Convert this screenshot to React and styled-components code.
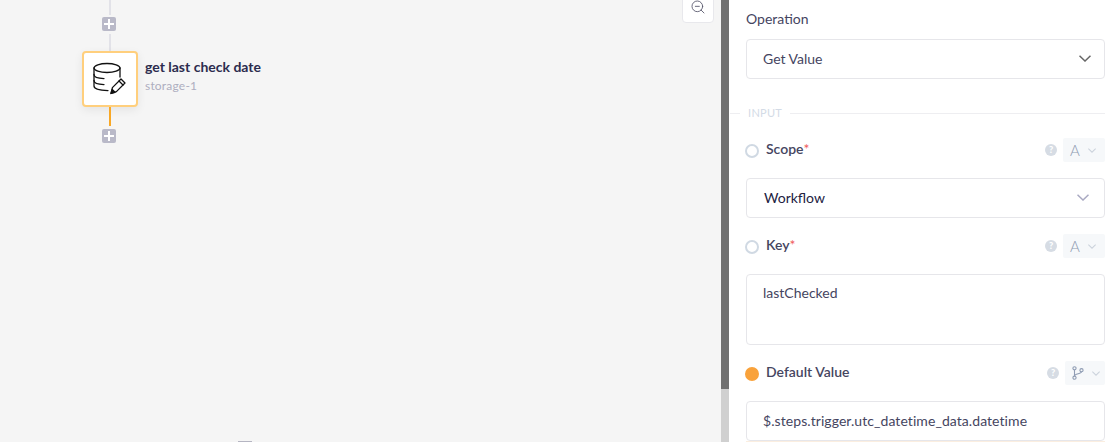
import React from "react";
import styled, { createGlobalStyle } from "styled-components";
import { ZoomOut } from "lucide-react";

const Global = createGlobalStyle`
  html, body { margin: 0; padding: 0; height: 100%; overflow: hidden; background: #fff; }
  body { font-family: "Lato", "Noto Sans", sans-serif; color: #3d3d5c; }
`;

const Page = styled.div`
  display: flex;
  width: 1116px;
  height: 442px;
  overflow: hidden;
`;

/* left canvas */
const Canvas = styled.div`
  position: relative;
  width: 721px;
  flex: none;
  background: #f5f5f5;
  padding-left: 82px;
  box-sizing: border-box;
`;

const Flow = styled.div`
  display: flex;
  flex-direction: column;
  align-items: flex-start;
`;

const Line = styled.div`
  width: 2px;
  margin-left: 27px;
  height: ${p => p.$h}px;
  background: ${p => p.$active ? "#f9a826" : "#e2e2e8"};
`;

const PlusBox = styled.div`
  width: 14px;
  height: 14px;
  margin-left: 20px;
  margin-top: ${p => p.$mt || 0}px;
  margin-bottom: ${p => p.$mb || 0}px;
  background: #b9b9c8;
  border-radius: 2px;
  display: flex;
  align-items: center;
  justify-content: center;
`;

const NodeRow = styled.div`
  display: flex;
  align-items: flex-start;
  gap: 7px;
`;

const NodeBox = styled.div`
  width: 56px;
  height: 56px;
  box-sizing: border-box;
  background: #fff;
  border: 2px solid #ffcf7d;
  border-radius: 4px;
  box-shadow: 0 3px 10px rgba(0, 0, 0, 0.07);
  display: flex;
  align-items: center;
  justify-content: center;
`;

const NodeText = styled.div`
  padding-top: 7px;
`;

const NodeTitle = styled.div`
  font-size: 14px;
  line-height: 18px;
  font-weight: 700;
  color: #2c2c4e;
`;

const NodeSub = styled.div`
  font-size: 12px;
  line-height: 16px;
  letter-spacing: 0.2px;
  margin-top: 2px;
  color: #aeaebf;
`;

const ZoomButton = styled.button`
  position: absolute;
  left: 682px;
  top: -10px;
  width: 32px;
  height: 33px;
  padding: 0 0 7px;
  background: #fff;
  border: 1px solid #e8e8ec;
  border-radius: 4px;
  display: flex;
  align-items: flex-end;
  justify-content: center;
  box-sizing: border-box;
  color: #55556a;
`;

const BottomStub = styled.div`
  position: absolute;
  left: 238px;
  bottom: 0;
  width: 14px;
  height: 1px;
  background: #b5b5c2;
`;

/* scrollbar */
const Scrollbar = styled.div`
  width: 8px;
  flex: none;
  display: flex;
  flex-direction: column;
  background: #d0d0d0;
`;

const Thumb = styled.div`
  height: 389px;
  background: #717171;
`;

/* right panel */
const Panel = styled.div`
  flex: 1;
  background: #fff;
  padding: 9px 11px 0 17px;
  min-width: 0;
`;

const PlainLabel = styled.div`
  font-size: 14px;
  line-height: 19px;
  color: #45455f;
  margin-bottom: 11px;
`;

const Field = styled.div`
  height: ${p => p.$h || 40}px;
  box-sizing: border-box;
  border: 1px solid #e6e6ea;
  border-radius: 4px;
  display: flex;
  align-items: ${p => p.$top ? "flex-start" : "center"};
  justify-content: space-between;
  padding: ${p => p.$top ? "8px 13px 0" : "0 13px 1px"};
  padding-left: ${p => p.$dark ? 17 : 16}px;
  padding-right: ${p => p.$dark ? 15 : 13}px;
  font-size: 14px;
  line-height: 19px;
  letter-spacing: ${p => p.$wide ? "0.07px" : "0"};
  color: ${p => p.$dark ? "#22223f" : "#45455f"};
`;

const FieldEdge = styled.div`
  height: 1px;
  background: #fbeee0;
`;

const Divider = styled.div`
  display: flex;
  align-items: center;
  gap: 8px;
  margin: 26px 0 17px -16px;
  font-size: 11px;
  line-height: 16px;
  letter-spacing: 0.3px;
  color: #d3dbe6;
  &::before {
    content: "";
    width: 10px;
    height: 1px;
    background: #eeeef1;
  }
  &::after {
    content: "";
    flex: 1;
    height: 1px;
    background: #eeeef1;
  }
`;

const ParamRow = styled.div`
  display: flex;
  align-items: center;
  height: 24px;
  margin: ${p => p.$mt || 0}px 0 16px;
`;

const Radio = styled.span`
  width: 14px;
  height: 14px;
  box-sizing: border-box;
  border-radius: 50%;
  margin: 2px 7px 0 -1px;
  flex: none;
  border: 2px solid ${p => p.$on ? "#f9a23b" : "#d0d9e3"};
  background: ${p => p.$on ? "#f9a23b" : "#fff"};
`;

const ParamName = styled.span`
  font-size: 14px;
  font-weight: 600;
  color: #46465f;
  flex: 1;
  padding-bottom: 4px;
`;

const Required = styled.span`
  color: #ef5b5b;
  font-weight: 400;
`;

const Help = styled.span`
  width: 12px;
  height: 12px;
  border-radius: 50%;
  background: #d6dce4;
  color: #fff;
  font-size: 9px;
  font-weight: 900;
  line-height: 12px;
  text-align: center;
  margin-right: 6px;
`;

const TypeBadge = styled.div`
  height: 24px;
  width: ${p => p.$w}px;
  box-sizing: border-box;
  background: #f6f8fa;
  border-radius: 2px;
  display: flex;
  align-items: center;
  padding-left: 7px;
  gap: 8px;
  font-size: 15px;
  font-weight: 300;
  color: #8f9cb3;
`;

const Chevron = ({ size = 12, color = "#666", width = 1.5 }) => (
  <svg width={size} height={size / 2 + 1} viewBox="0 0 12 7" fill="none" stroke={color} strokeWidth={width}>
    <path d="M0.5 0.7 L6 6 L11.5 0.7" />
  </svg>
);

const PlusIcon = () => (
  <svg width="10" height="10" viewBox="0 0 10 10" fill="#fff">
    <path d="M4 0h2v4h4v2H6v4H4V6H0V4h4z" />
  </svg>
);

const StorageIcon = () => (
  <svg width="34" height="34" viewBox="0 0 34 34" fill="none" stroke="#111" strokeWidth="1.3" strokeLinecap="round" strokeLinejoin="round">
    <ellipse cx="14" cy="6" rx="13" ry="4.5" />
    <path d="M1 6V24C1 26.5 6 28.4 15 28.6" />
    <path d="M27 6V15" />
    <path d="M1 12.5C1 14.8 5 16.4 11 16.6" />
    <path d="M1 18.5C1 20.8 5 22.4 11 22.6" />
    <path d="M18 31.5L19.4 25.6L28 17L32 21L23.4 29.6Z" />
    <path d="M26 19L30 23" />
    <path d="M18 31.5L19.2 27.5L22 30.3Z" fill="#111" />
  </svg>
);

const BranchIcon = () => (
  <svg width="12" height="14" viewBox="0 0 12 14" fill="none" stroke="#8f9cb3" strokeWidth="1.1">
    <circle cx="2.5" cy="2.3" r="1.6" />
    <circle cx="2.5" cy="11.7" r="1.6" />
    <circle cx="9.5" cy="4.2" r="1.6" />
    <path d="M2.5 3.9V10.1" />
    <path d="M9.5 5.8C9.5 8 2.5 7.5 2.5 10" />
  </svg>
);

function Param({ name, required, on, mt, badge }) {
  return (
    <ParamRow $mt={mt}>
      <Radio $on={on} />
      <ParamName>{name}{required && <Required>*</Required>}</ParamName>
      <Help>?</Help>
      {badge === "branch" ? (
        <TypeBadge $w={40}>
          <BranchIcon />
          <Chevron size={8} color="#cbd2dc" width={1.6} />
        </TypeBadge>
      ) : (
        <TypeBadge $w={42}>
          A
          <Chevron size={8} color="#cbd2dc" width={1.6} />
        </TypeBadge>
      )}
    </ParamRow>
  );
}

export default function App() {
  return (
    <Page>
      <Global />
      <Canvas>
        <Flow>
          <Line $h={15} />
          <PlusBox $mt={2} $mb={3}><PlusIcon /></PlusBox>
          <Line $h={17} />
          <NodeRow>
            <NodeBox><StorageIcon /></NodeBox>
            <NodeText>
              <NodeTitle>get last check date</NodeTitle>
              <NodeSub>storage-1</NodeSub>
            </NodeText>
          </NodeRow>
          <Line $h={19} $active />
          <PlusBox $mt={3}><PlusIcon /></PlusBox>
        </Flow>
        <ZoomButton><ZoomOut size={16} strokeWidth={1.3} /></ZoomButton>
        <BottomStub />
      </Canvas>
      <Scrollbar><Thumb /></Scrollbar>
      <Panel>
        <PlainLabel>Operation</PlainLabel>
        <Field>Get Value<Chevron /></Field>
        <Divider>INPUT</Divider>
        <Param name="Scope" required />
        <Field $dark>Workflow<Chevron color="#a9a9c2" /></Field>
        <Param name="Key" required mt={16} />
        <Field $h={71} $top>lastChecked</Field>
        <Param name="Default Value" on mt={16} badge="branch" />
        <Field $wide>$.steps.trigger.utc_datetime_data.datetime</Field>
        <FieldEdge />
      </Panel>
    </Page>
  );
}
